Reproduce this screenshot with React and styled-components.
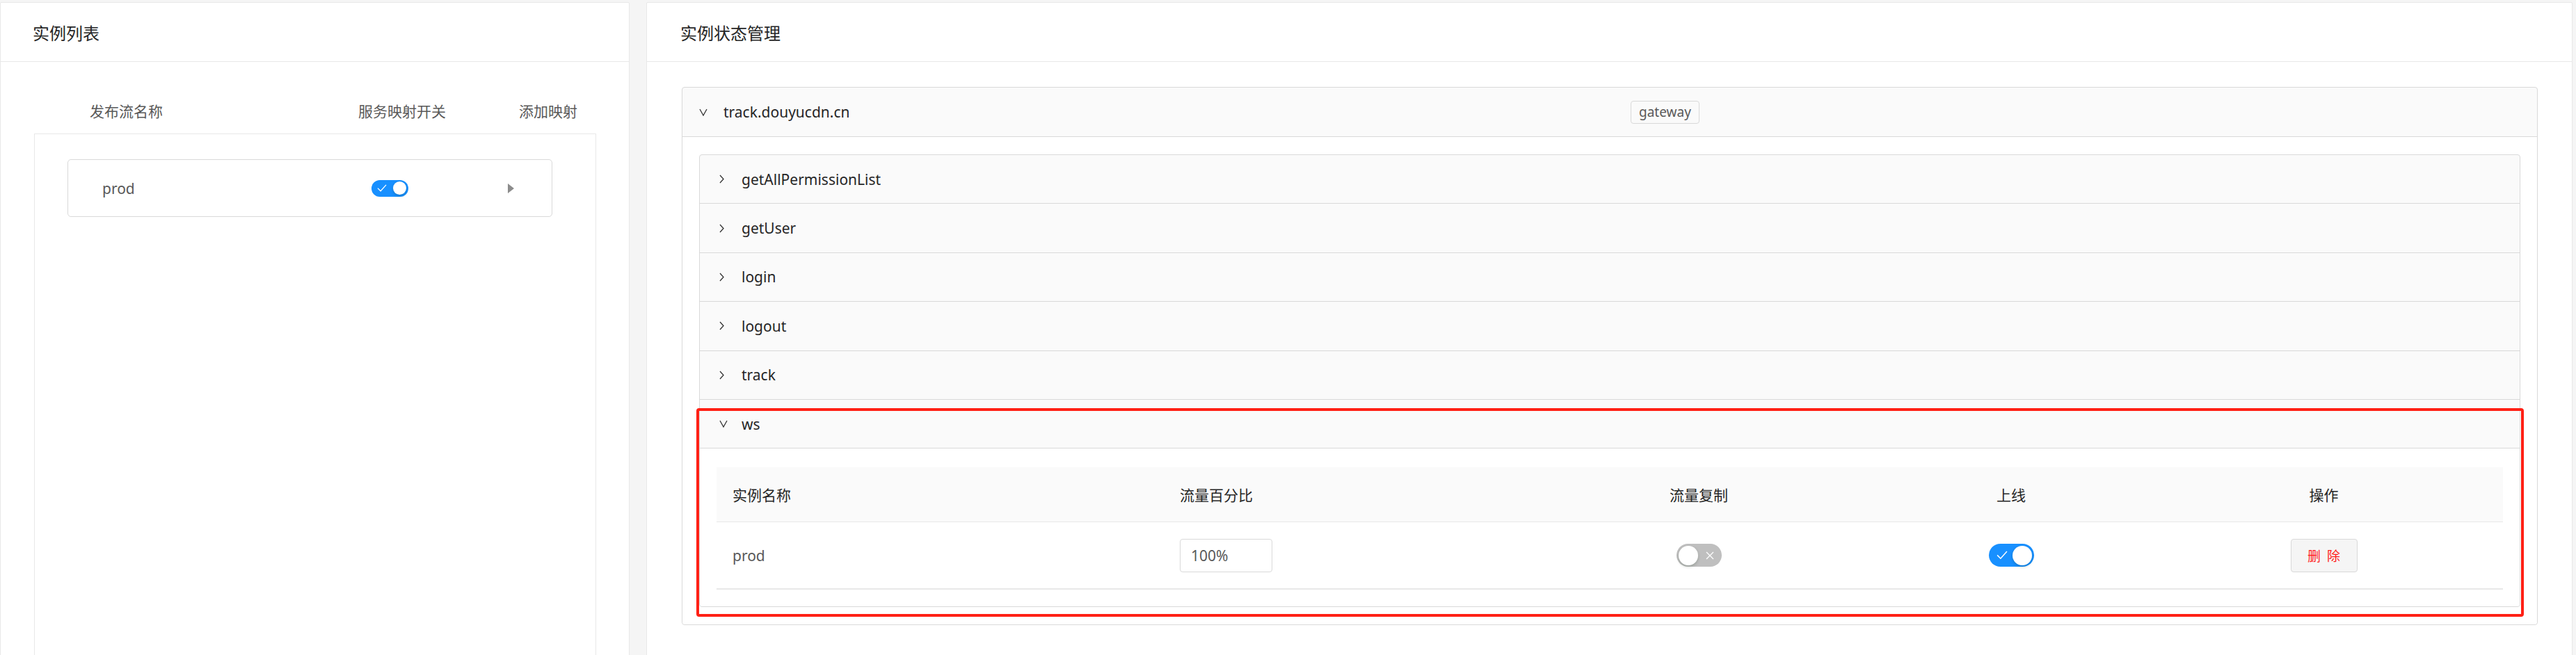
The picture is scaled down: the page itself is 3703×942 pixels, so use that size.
import React from "react";
import styled, { createGlobalStyle } from "styled-components";

const FONT = `"Noto Sans", "Noto Sans CJK SC", sans-serif`;

const GlobalStyle = createGlobalStyle`
  html, body {
    margin: 0;
    padding: 0;
  }
  body {
    font-family: ${FONT};
    background: #f5f5f5;
    color: #262626;
  }
  * {
    box-sizing: border-box;
  }
`;

const Page = styled.div`
  display: flex;
  gap: 24px;
  height: 100vh;
  padding: 3px 5px 0 0;
  overflow: hidden;
  background: #f5f5f5;
`;

const Panel = styled.section`
  flex: ${({ $width }) => ($width ? `0 0 ${$width}` : "1 1 auto")};
  display: flex;
  flex-direction: column;
  min-height: 1000px;
  background: #fff;
  border: 1px solid #e8e8e8;
  border-radius: 2px;
`;

const PanelHeader = styled.header`
  display: flex;
  align-items: center;
  height: 85px;
  padding: 0 ${({ $pad }) => $pad || "48px"};
  font-size: 24px;
  color: #262626;
  border-bottom: 1px solid #e8e8e8;
`;

const PanelBody = styled.div`
  flex: 1;
  display: flex;
  flex-direction: column;
  padding: ${({ $pad }) => $pad};
`;

/* left: instance list */

const ListHead = styled.div`
  display: grid;
  grid-template-columns: 386px 231px auto;
  align-items: center;
  height: 67px;
  padding-left: 80px;
  font-size: 21px;
  color: #595959;
`;

const ListBox = styled.div`
  flex: 1;
  padding: 36px 62px 0 47px;
  border: 1px solid #e8e8e8;
  border-bottom: none;
`;

const StreamCard = styled.div`
  display: grid;
  grid-template-columns: 387px 196px auto;
  align-items: center;
  height: 83px;
  padding-left: 49px;
  border: 1px solid #d9d9d9;
  border-radius: 5px;
  font-size: 21px;
  color: #595959;
`;

/* switch */

const SwitchTrack = styled.span`
  display: inline-flex;
  flex-direction: ${({ $on }) => ($on ? "row" : "row-reverse")};
  align-items: center;
  justify-content: space-between;
  width: ${({ $w }) => $w}px;
  height: ${({ $h }) => $h}px;
  padding: ${({ $on, $inset, $iconPad }) =>
    $on ? `0 ${$inset}px 0 ${$iconPad}px` : `0 ${$iconPad}px 0 ${$inset}px`};
  border-radius: ${({ $h }) => $h / 2}px;
  background: ${({ $on }) => ($on ? "#1890ff" : "#bfbfbf")};
`;

const Knob = styled.span`
  width: ${({ $d }) => $d}px;
  height: ${({ $d }) => $d}px;
  border-radius: 50%;
  background: #fff;
  box-shadow: 0 2px 4px rgba(0, 35, 11, 0.2);
`;

const SIZES = {
  sm: { w: 53, h: 24, d: 19, inset: 3, iconPad: 8, icon: 14 },
  md: { w: 65, h: 33, d: 28, inset: 3, iconPad: 11, icon: 16 },
};

function Switch({ on, size = "md" }) {
  const s = SIZES[size];
  return (
    <SwitchTrack $on={on} $w={s.w} $h={s.h} $inset={s.inset} $iconPad={s.iconPad}>
      {on ? (
        <svg width={s.icon} height={s.icon * 0.8} viewBox="0 0 15 12">
          <polyline points="1,6 5.5,10.5 14,1" fill="none" stroke="#fff" strokeWidth="1.4" />
        </svg>
      ) : (
        <svg width="12" height="12" viewBox="0 0 12 12">
          <path d="M1 1 L11 11 M11 1 L1 11" stroke="#fff" strokeWidth="1.3" />
        </svg>
      )}
      <Knob $d={s.d} />
    </SwitchTrack>
  );
}

const Caret = () => (
  <svg width="9" height="14" viewBox="0 0 9 14">
    <polygon points="0,0 9,7 0,14" fill="#8c8c8c" />
  </svg>
);

const Chevron = ({ open }) =>
  open ? (
    <svg width="12" height="11" viewBox="0 0 12 11">
      <polyline points="1,1 6,10 11,1" fill="none" stroke="#333" strokeWidth="1.3" />
    </svg>
  ) : (
    <svg width="7" height="13" viewBox="0 0 7 13">
      <polyline points="1,1 6,6.5 1,12" fill="none" stroke="#333" strokeWidth="1.3" />
    </svg>
  );

/* right: collapse */

const Collapse = styled.div`
  background: #fafafa;
  border: 1px solid #d9d9d9;
  border-radius: 4px;
`;

const OuterHeader = styled.div`
  display: grid;
  grid-template-columns: 35px 1304px auto;
  align-items: center;
  height: 71px;
  padding-left: 24px;
  font-size: 21px;
  color: #262626;
  border-bottom: 1px solid #d9d9d9;
`;

const OuterContent = styled.div`
  padding: 25px 24px;
  background: #fff;
  border-radius: 0 0 4px 4px;
`;

const Tag = styled.span`
  justify-self: start;
  height: 33px;
  padding: 0 11px;
  line-height: 31px;
  font-size: 19px;
  color: #595959;
  background: #fafafa;
  border: 1px solid #d9d9d9;
  border-radius: 4px;
`;

const Item = styled.div`
  position: relative;
`;

const ItemHeader = styled.div`
  display: flex;
  align-items: center;
  height: 70.4px;
  padding-left: 28px;
  font-size: 21px;
  color: #262626;
  border-bottom: 1px solid #d9d9d9;
`;

const IconSlot = styled.span`
  display: inline-flex;
  align-items: center;
  width: 32px;
`;

const ItemContent = styled.div`
  padding: 27px 24px 24px;
  background: #fff;
  border-radius: 0 0 4px 4px;
`;

const Highlight = styled.div`
  position: absolute;
  top: 12px;
  left: -5px;
  right: -6px;
  bottom: -15px;
  border: 4px solid #ff2015;
  border-radius: 4px;
  pointer-events: none;
`;

/* table */

const TableRow = styled.div`
  display: grid;
  grid-template-columns: 643px 512px 514px 384px 1fr;
  align-items: center;
  height: ${({ $head }) => ($head ? "79px" : "97px")};
  font-size: 21px;
  color: ${({ $head }) => ($head ? "#262626" : "#595959")};
  background: ${({ $head }) => ($head ? "#fafafa" : "#fff")};
  border-bottom: ${({ $head }) => ($head ? "1px" : "2px")} solid #e8e8e8;
`;

const Cell = styled.div`
  display: flex;
  align-items: center;
  justify-content: ${({ $center }) => ($center ? "center" : "flex-start")};
  padding: 0 23px;
`;

const PercentInput = styled.input`
  width: 133px;
  height: 48px;
  padding: 0 15px;
  font-family: ${FONT};
  font-size: 21px;
  color: #595959;
  background: #fff;
  border: 1px solid #d9d9d9;
  border-radius: 4px;
  outline: none;
`;

const DeleteButton = styled.button`
  width: 96px;
  height: 48px;
  padding: 0;
  font-family: ${FONT};
  font-size: 19px;
  word-spacing: 4px;
  color: #ff1a1a;
  background: #f5f5f5;
  border: 1px solid #d9d9d9;
  border-radius: 4px;
  cursor: pointer;
`;

const apis = ["getAllPermissionList", "getUser", "login", "logout", "track"];

export default function App() {
  return (
    <>
      <GlobalStyle />
      <Page>
        <Panel $width="905px">
          <PanelHeader $pad="46px">实例列表</PanelHeader>
          <PanelBody $pad="36px 47px 0 48px">
            <ListHead>
              <span>发布流名称</span>
              <span>服务映射开关</span>
              <span>添加映射</span>
            </ListHead>
            <ListBox>
              <StreamCard>
                <span>prod</span>
                <Switch on size="sm" />
                <Caret />
              </StreamCard>
            </ListBox>
          </PanelBody>
        </Panel>

        <Panel>
          <PanelHeader>实例状态管理</PanelHeader>
          <PanelBody $pad="36px 49px 0 50px">
            <Collapse>
              <OuterHeader>
                <Chevron open />
                <span>track.douyucdn.cn</span>
                <Tag>gateway</Tag>
              </OuterHeader>
              <OuterContent>
                <Collapse>
                  {apis.map((name) => (
                    <Item key={name}>
                      <ItemHeader>
                        <IconSlot>
                          <Chevron />
                        </IconSlot>
                        {name}
                      </ItemHeader>
                    </Item>
                  ))}
                  <Item>
                    <ItemHeader>
                      <IconSlot>
                        <Chevron open />
                      </IconSlot>
                      ws
                    </ItemHeader>
                    <ItemContent>
                      <TableRow $head>
                        <Cell>实例名称</Cell>
                        <Cell>流量百分比</Cell>
                        <Cell $center>流量复制</Cell>
                        <Cell $center>上线</Cell>
                        <Cell $center>操作</Cell>
                      </TableRow>
                      <TableRow>
                        <Cell>prod</Cell>
                        <Cell>
                          <PercentInput defaultValue="100%" />
                        </Cell>
                        <Cell $center>
                          <Switch on={false} />
                        </Cell>
                        <Cell $center>
                          <Switch on />
                        </Cell>
                        <Cell $center>
                          <DeleteButton>删 除</DeleteButton>
                        </Cell>
                      </TableRow>
                    </ItemContent>
                    <Highlight />
                  </Item>
                </Collapse>
              </OuterContent>
            </Collapse>
          </PanelBody>
        </Panel>
      </Page>
    </>
  );
}
